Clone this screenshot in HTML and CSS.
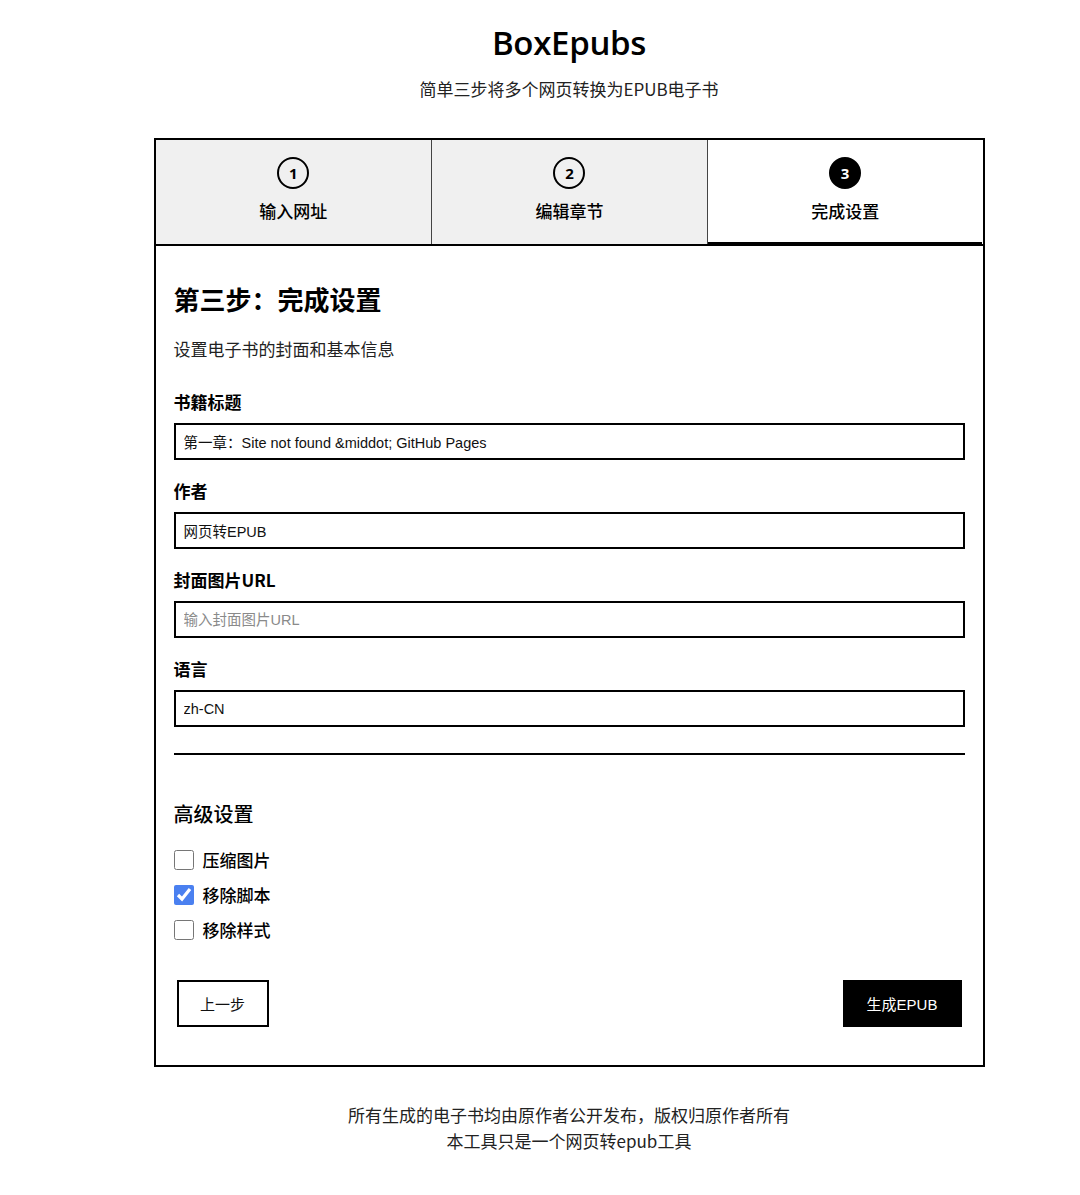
FILE: index.html
```html
<!DOCTYPE html>
<html lang="zh-CN">
<head>
<meta charset="utf-8">
<title>BoxEpubs</title>
<link rel="stylesheet" href="styles.css">
</head>
<body>
<div class="page">
  <header class="hero">
    <h1 class="brand">BoxEpubs</h1>
    <p class="tagline">简单三步将多个网页转换为EPUB电子书</p>
  </header>

  <section class="card">
    <nav class="steps">
      <div class="step">
        <span class="step-num">1</span>
        <span class="step-label">输入网址</span>
      </div>
      <div class="step">
        <span class="step-num">2</span>
        <span class="step-label">编辑章节</span>
      </div>
      <div class="step step-active">
        <span class="step-num">3</span>
        <span class="step-label">完成设置</span>
      </div>
    </nav>

    <div class="panel">
      <h2 class="panel-title">第三步：完成设置</h2>
      <p class="panel-desc">设置电子书的封面和基本信息</p>

      <div class="field">
        <label class="field-label">书籍标题</label>
        <input class="field-input" type="text" value="第一章：Site not found &amp;middot; GitHub Pages">
      </div>
      <div class="field">
        <label class="field-label">作者</label>
        <input class="field-input" type="text" value="网页转EPUB">
      </div>
      <div class="field">
        <label class="field-label">封面图片URL</label>
        <input class="field-input" type="text" placeholder="输入封面图片URL">
      </div>
      <div class="field">
        <label class="field-label">语言</label>
        <input class="field-input" type="text" value="zh-CN">
      </div>

      <hr class="divider">

      <h3 class="adv-title">高级设置</h3>
      <div class="options">
        <label class="option"><input type="checkbox" class="check"><span>压缩图片</span></label>
        <label class="option"><input type="checkbox" class="check" checked><span>移除脚本</span></label>
        <label class="option"><input type="checkbox" class="check"><span>移除样式</span></label>
      </div>

      <div class="actions">
        <button class="btn btn-outline">上一步</button>
        <button class="btn btn-solid">生成EPUB</button>
      </div>
    </div>
  </section>

  <footer class="foot">
    <p>所有生成的电子书均由原作者公开发布，版权归原作者所有</p>
    <p>本工具只是一个网页转epub工具</p>
  </footer>
</div>
</body>
</html>
```

FILE: styles.css
```css
* { box-sizing: border-box; }

html, body {
  margin: 0;
  padding: 0;
  background: #fff;
}

body {
  padding-left: 58px;
  font-family: "Noto Sans", "Noto Sans CJK SC", sans-serif;
  color: #000;
}

.page {
  width: 831px;
  margin: 0 auto;
}

.hero {
  text-align: center;
  padding-top: 20px;
}

.brand {
  margin: 0;
  font-family: "Open Sans", "Noto Sans CJK SC", sans-serif;
  font-weight: 600;
  font-size: 33px;
  line-height: 46px;
  letter-spacing: -0.3px;
}

.tagline {
  margin: 11px 0 0;
  font-family: "Noto Sans CJK SC", sans-serif;
  font-size: 17px;
  line-height: 24px;
  color: #222;
}

.card {
  margin-top: 37px;
  border: 2px solid #000;
  font-family: "Noto Sans CJK SC", sans-serif;
}

.steps {
  display: grid;
  grid-template-columns: 1fr 1fr 1fr;
  border-bottom: 2px solid #000;
}

.step {
  background: #f0f0f0;
  height: 104px;
  display: flex;
  flex-direction: column;
  align-items: center;
  padding-top: 17px;
  border-left: 1px solid #444;
}

.step:first-child { border-left: none; }

.step-num {
  width: 32px;
  height: 32px;
  border: 2px solid #000;
  border-radius: 50%;
  display: flex;
  align-items: center;
  justify-content: center;
  font-family: "Open Sans", sans-serif;
  font-weight: 700;
  font-size: 15px;
}

.step-label {
  margin-top: 10px;
  font-size: 17px;
  line-height: 24px;
  font-weight: 500;
}

.step-active {
  background: #fff;
  box-shadow: inset 0 -2px 0 #000;
}

.step-active .step-num {
  background: #000;
  color: #fff;
}

.panel {
  padding: 35px 18px 38px;
}

.panel-title {
  margin: 0;
  font-size: 26px;
  line-height: 36px;
  font-weight: 700;
}

.panel-desc {
  margin: 20px 0 0;
  font-size: 17px;
  line-height: 24px;
  color: #222;
}

.field {
  display: flex;
  flex-direction: column;
  margin-top: 19px;
}

.panel-desc + .field { margin-top: 29px; }

.field-label {
  font-size: 17px;
  line-height: 24px;
  font-weight: 700;
  margin-bottom: 9px;
}

.field-input {
  width: 100%;
  height: 37px;
  border: 2px solid #000;
  padding: 0 8px;
  font-family: "Liberation Sans", "Noto Sans CJK SC", sans-serif;
  font-size: 14.5px;
  color: #111;
  background: #fff;
  outline: none;
}

.field-input::placeholder {
  color: #8a8a8a;
}

.divider {
  margin: 26px 0 0;
  border: none;
  border-top: 2px solid #000;
}

.adv-title {
  margin: 45px 0 0;
  font-size: 20px;
  line-height: 28px;
  font-weight: 500;
}

.options {
  display: flex;
  flex-direction: column;
  gap: 11px;
  margin-top: 20px;
}

.option {
  display: flex;
  align-items: center;
  gap: 9px;
  font-size: 17px;
  line-height: 24px;
  font-weight: 500;
}

.check {
  width: 20px;
  height: 20px;
  margin: 0;
  accent-color: #4a80f0;
}

.actions {
  display: flex;
  justify-content: space-between;
  margin-top: 38px;
  padding: 0 3px;
}

.btn {
  height: 47px;
  font-family: "Liberation Sans", "Noto Sans CJK SC", sans-serif;
  font-size: 15px;
  cursor: pointer;
}

.btn-outline {
  width: 92px;
  background: #fff;
  border: 2px solid #000;
  color: #111;
}

.btn-solid {
  width: 119px;
  background: #000;
  border: none;
  color: #fff;
}

.foot {
  margin-top: 35px;
  text-align: center;
  font-family: "Noto Sans CJK SC", sans-serif;
  font-size: 17px;
  line-height: 26px;
  color: #222;
}

.foot p { margin: 0; }
```
